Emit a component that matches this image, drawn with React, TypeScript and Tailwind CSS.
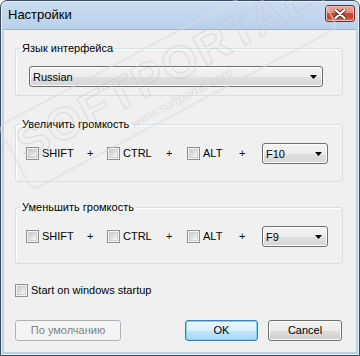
import React from "react"

function Check({ className = "" }: { className?: string }) {
  return (
    <span className={`flex h-[13px] w-[13px] shrink-0 items-center justify-center border border-[#8e8f8f] bg-[#f4f4f4] ${className}`}>
      <span className="h-[9px] w-[9px] border border-[#d0d0d0] bg-[linear-gradient(135deg,#cbcbcb,#f7f7f7)]" />
    </span>
  )
}

function Combo({ value, className = "" }: { value: string; className?: string }) {
  return (
    <div
      className={`flex h-[21px] shrink-0 items-center rounded-[3px] border border-[#707070] bg-[linear-gradient(#f4f4f4_0%,#ececec_50%,#e0e0e0_50%,#d6d6d6_100%)] pl-[3px] pr-[5px] shadow-[inset_0_0_0_1px_#fbfbfb] ${className}`}
    >
      <span className="flex-1 leading-[14px]">{value}</span>
      <svg width="7" height="4" viewBox="0 0 7 4">
        <path d="M0 0h7L3.5 4z" fill="#000" />
      </svg>
    </div>
  )
}

function Hotkeys({ fkey, rowClass }: { fkey: string; rowClass: string }) {
  return (
    <div className={`flex items-center ${rowClass}`}>
      <Check className="ml-[10px]" />
      <span className="ml-[3px] w-[45px]">SHIFT</span>
      <span className="w-[20px]">+</span>
      <Check />
      <span className="ml-[3px] w-[43px]">CTRL</span>
      <span className="w-[21px]">+</span>
      <Check />
      <span className="ml-[3px] w-[36px]">ALT</span>
      <span className="w-[23px]">+</span>
      <Combo value={fkey} className="w-[66px]" />
    </div>
  )
}

function Group({ title, children, className = "" }: { title: string; children: React.ReactNode; className?: string }) {
  return (
    <fieldset className={`ml-[11px] w-[328px] rounded-[3px] border border-[#d5dfe5] shadow-[inset_1px_1px_0_#fff] ${className}`}>
      <legend className="ml-[4px] px-[2px] leading-[14px]">{title}</legend>
      {children}
    </fieldset>
  )
}

export default function App() {
  return (
    <div className="relative h-[356px] w-[360px] overflow-hidden bg-white font-['Liberation_Sans',Arial,sans-serif] text-[11px] text-black">
      <div className="flex h-full flex-col rounded-t-[7px] border border-[#3b4a5c] bg-[linear-gradient(#cbdcf1,#b9d0ea_30px,#b9d0ea)] shadow-[inset_0_0_0_1px_#e6eef8]">
        {/* title bar */}
        <div className="flex h-[28px] shrink-0 items-start">
          <span className="ml-[7px] mt-[6px] text-[13px] leading-[16px] text-black">Настройки</span>
          <button className="ml-auto mr-[4px] mt-[4px] flex h-[17px] w-[30px] items-center justify-center rounded-[3px] border border-[#7b2b21] bg-[linear-gradient(#e9a899_0%,#df8e7e_45%,#c9432f_50%,#c84a36_80%,#d9826c_100%)] shadow-[inset_0_0_0_1px_#efb9ad]">
            <svg width="12" height="10" viewBox="0 0 12 10">
              <path d="M1.5 1l9 8M10.5 1l-9 8" stroke="#5a2a22" strokeWidth="4" strokeLinecap="round" />
              <path d="M1.5 1l9 8M10.5 1l-9 8" stroke="#fff" strokeWidth="2.2" strokeLinecap="round" />
            </svg>
          </button>
        </div>

        {/* client area */}
        <div className="mx-[3px] mb-[3px] flex flex-1 flex-col border-t border-[#9fb3ca] bg-[#f0f0f0]">
          <Group title="Язык интерфейса" className="mt-[11px]">
            <div className="pb-[8px] pl-[13px] pt-[11px]">
              <Combo value="Russian" className="w-[294px]" />
            </div>
          </Group>

          <Group title="Увеличить громкость" className="mt-[21px]">
            <Hotkeys fkey="F10" rowClass="pt-[12px] pb-[17px]" />
          </Group>

          <Group title="Уменьшить громкость" className="mt-[18px]">
            <Hotkeys fkey="F9" rowClass="pt-[12px] pb-[16px]" />
          </Group>

          <div className="ml-[11px] mt-[18px] flex items-center leading-[16px]">
            <Check />
            <span className="ml-[3px]">Start on windows startup</span>
          </div>

          <div className="ml-[11px] mt-[22px] flex">
            <button className="h-[21px] w-[106px] rounded-[3px] border border-[#adb2b5] bg-[#f4f4f4] text-[#838383]">
              По умолчанию
            </button>
            <button className="ml-auto h-[21px] w-[73px] rounded-[3px] border border-[#3c7fb1] bg-[linear-gradient(#eaf6fd_0%,#d9f0fc_50%,#bee6fd_50%,#a7d9f5_100%)] shadow-[inset_0_0_0_1px_#7cd1f7]">
              OK
            </button>
            <button className="ml-[10px] mr-[14px] h-[21px] w-[74px] rounded-[3px] border border-[#707070] bg-[linear-gradient(#f2f2f2_0%,#ebebeb_50%,#dddddd_50%,#cfcfcf_100%)] shadow-[inset_0_0_0_1px_#fbfbfb]">
              Cancel
            </button>
          </div>
        </div>
      </div>

      {/* watermark */}
      <div className="pointer-events-none absolute left-[-6px] top-[40px] flex -rotate-[28deg] flex-col items-start rounded-[8px] border-2 border-[#dcdcdc] px-[8px] py-[2px] opacity-50">
        <span className="text-[46px] font-bold leading-[50px] tracking-[2px] text-transparent [-webkit-text-stroke:1px_#c8c8c8]">
          SOFTPORTAL
        </span>
        <span className="ml-[110px] text-[13px] italic leading-[16px] text-[#d0d0d0]">www.softportal.com</span>
      </div>
    </div>
  )
}
